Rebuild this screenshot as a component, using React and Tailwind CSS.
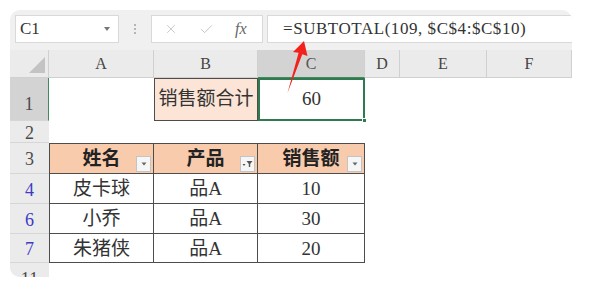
import React from 'react';
import { X, Check } from 'lucide-react';

const serif = 'font-["Liberation_Serif","Noto_Sans_CJK_SC",serif]';

const cols = ['A', 'B', 'C', 'D', 'E', 'F'];

// filter button at bottom-right of the table header cells
const FilterBtn = ({ funnel }) => (
  <div className="absolute right-[2px] bottom-[1px] w-[15px] h-[16px] bg-[#f6f6f6] border border-[#c4c4c4] flex items-center justify-center">
    {funnel ? (
      <svg width="11" height="8" viewBox="0 0 11 8">
        <path d="M0.5 4 L3.5 4 L2 6 Z" fill="#555" />
        <path d="M4.5 1 L10.5 1 L8.2 4 L8.2 7 L6.8 7 L6.8 4 Z" fill="#555" />
      </svg>
    ) : (
      <svg width="6" height="4" viewBox="0 0 6 4">
        <path d="M0.5 0.5 L5.5 0.5 L3 3.5 Z" fill="#666" />
      </svg>
    )}
  </div>
);

const RowHead = ({ n, h, blue, sel }) => (
  <div
    className={`flex items-center justify-center pt-[3px] border-b border-[#d6d6d6] text-[18px] ${serif} ${
      sel ? 'bg-[#d3d3d3] border-r border-r-[#3f8a5f] items-end pb-[2px]' : 'bg-[#ebebeb]'
    } ${blue ? 'text-[#3c3cc8]' : 'text-[#4a4a4a]'}`}
    style={{ height: h }}
  >
    {n}
  </div>
);

const TCell = ({ children, first, head, filter }) => (
  <div
    className={`relative flex items-center justify-center border-r border-b border-[#4d4d4d] text-[19px] leading-none ${serif} ${
      first ? 'border-l' : ''
    } ${head ? 'border-t bg-[#f8cbad] font-bold text-[#222]' : 'bg-white text-[#333]'}`}
  >
    {children}
    {head && <FilterBtn funnel={filter === 'funnel'} />}
  </div>
);

const data = [
  { n: 4, name: '皮卡球', p: '品A', v: 10 },
  { n: 6, name: '小乔', p: '品A', v: 30 },
  { n: 7, name: '朱猪侠', p: '品A', v: 20 },
];

export default function App() {
  return (
    <div className="relative w-[600px] h-[294px] bg-white overflow-hidden">
      <div className="ml-[10px] mt-[10px] w-[562px] h-[267px] rounded-t-[10px] rounded-bl-[10px] bg-[#f0f0f0] overflow-hidden flex flex-col">
        {/* formula bar */}
        <div className="h-[40px] shrink-0 flex items-start pt-[5px] pl-[5px]">
          <div className="w-[104px] h-[28px] bg-white border border-[#d9d9d9] flex items-center justify-between pl-[4px] pr-[8px]">
            <span className={`text-[17px] text-[#333] ${serif}`}>C1</span>
            <svg width="6" height="4" viewBox="0 0 6 4">
              <path d="M0 0 L6 0 L3 4 Z" fill="#777" />
            </svg>
          </div>
          <div className="w-[32px] h-[28px] flex flex-col items-center justify-center gap-[2px]">
            <span className="w-[2px] h-[2px] bg-[#b5b5b5]" />
            <span className="w-[2px] h-[2px] bg-[#b5b5b5]" />
            <span className="w-[2px] h-[2px] bg-[#b5b5b5]" />
          </div>
          <div className="w-[112px] h-[28px] bg-white border border-[#d9d9d9] flex items-center pl-[12px]">
            <X size={14} strokeWidth={1.4} className="text-[#bdbdbd]" />
            <Check size={15} strokeWidth={1.4} className="text-[#bdbdbd] ml-[21px]" />
            <span className={`ml-[21px] italic text-[16px] text-[#666] ${serif}`}>fx</span>
          </div>
          <div className="ml-[4px] flex-1 h-[28px] bg-white border border-r-0 border-[#d9d9d9] flex items-center pl-[15px]">
            <span className={`text-[17px] tracking-[0.55px] text-[#333] ${serif}`}>=SUBTOTAL(109, $C$4:$C$10)</span>
          </div>
        </div>

        {/* sheet */}
        <div className="flex">
          {/* row headers */}
          <div className="w-[39px] shrink-0 flex flex-col">
            <div className="h-[28px] bg-[#ebebeb] border-b border-r border-[#d0d0d0] flex items-end justify-end pr-[3px] pb-[4px]">
              <svg width="16" height="16" viewBox="0 0 16 16">
                <path d="M16 0 L16 16 L0 16 Z" fill="#c3c3c3" />
              </svg>
            </div>
            <RowHead n={1} h={43} sel />
            <RowHead n={2} h={22} />
            <RowHead n={3} h={31} />
            <RowHead n={4} h={30} blue />
            <RowHead n={6} h={30} blue />
            <RowHead n={7} h={29} blue />
            <RowHead n={11} h={30} />
          </div>

          {/* cells */}
          <div className="flex-1 grid grid-cols-[105px_104px_107px_35px_87px_85px] grid-rows-[28px_43px_22px_31px_30px_30px_29px_30px] bg-white">
            {cols.map((c) => (
              <div
                key={c}
                className={`flex items-center justify-center border-r border-b border-[#d0d0d0] text-[16px] ${serif} ${
                  c === 'C' ? 'bg-[#d3d3d3] text-[#555] border-b-[#3f8a5f]' : 'bg-[#ebebeb] text-[#444]'
                }`}
              >
                {c}
              </div>
            ))}

            {/* row 1 */}
            <div />
            <div className={`flex items-center justify-center bg-[#fce4d6] border border-[#4d4d4d] text-[19px] text-[#333] ${serif}`}>
              销售额合计
            </div>
            <div className={`relative flex items-center justify-center border-2 border-[#2f7a4f] text-[19px] text-[#333] ${serif}`}>
              60
              <div className="absolute -right-[4px] -bottom-[4px] w-[5px] h-[5px] bg-[#2f7a4f] border border-white" />
            </div>
            <div />
            <div />
            <div />

            {/* row 2 */}
            <div className="col-span-6" />

            {/* row 3 header */}
            <TCell first head>姓名</TCell>
            <TCell head filter="funnel">产品</TCell>
            <TCell head>销售额</TCell>
            <div />
            <div />
            <div />

            {data.map((r) => (
              <React.Fragment key={r.n}>
                <TCell first>{r.name}</TCell>
                <TCell>{r.p}</TCell>
                <TCell>{r.v}</TCell>
                <div />
                <div />
                <div />
              </React.Fragment>
            ))}
          </div>
        </div>
      </div>

      {/* red annotation arrow */}
      <svg className="absolute left-0 top-0" width="600" height="294" viewBox="0 0 600 294">
        <path d="M304 41 L307.5 56 L302.3 54.2 L287.5 93 L298.6 52.8 L293 52 Z" fill="#f2211c" />
      </svg>
    </div>
  );
}
